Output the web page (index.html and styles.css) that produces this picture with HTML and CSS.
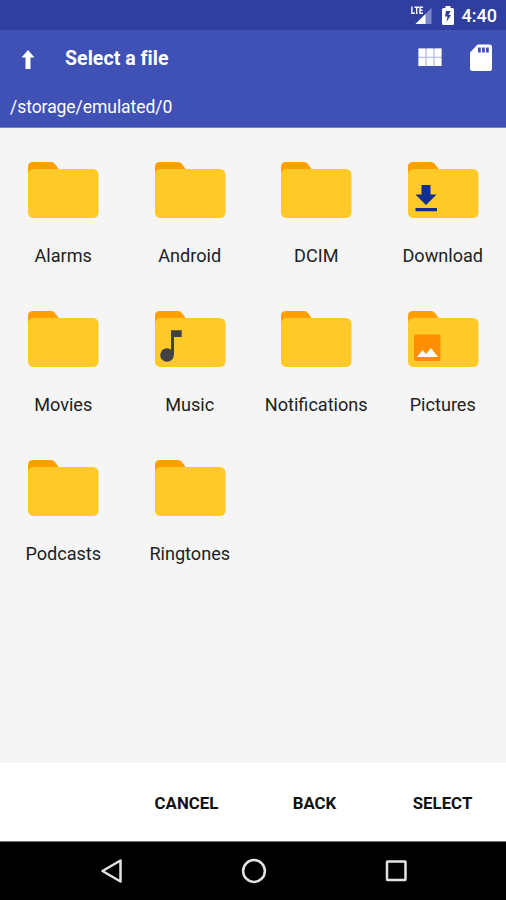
FILE: index.html
```html
<!DOCTYPE html>
<html lang="en">
<head>
<meta charset="utf-8">
<title>Select a file</title>
<link rel="stylesheet" href="styles.css">
</head>
<body>
<svg class="defs" aria-hidden="true">
  <symbol id="folder" viewBox="0 0 72 58">
    <path fill="#ffa000" d="M1 20V6Q1 1 6 1H24Q26.500 1 28 3L33 10V20Z"/>
    <rect x="1" y="8" width="70.500" height="49" rx="5.500" fill="#ffca28"/>
  </symbol>
</svg>
<div class="screen">
  <div class="status">
    <svg class="signal" width="22" height="20" viewBox="0 0 22 20">
      <path fill="#7e89cb" d="M20.500 3V19H4.500Z"/>
      <path fill="#fff" d="M14.500 9V19H4.500Z"/>
      <path fill="none" stroke="#fff" stroke-width="1.400" d="M.9 1.500V8.300H4M3.500 2.200H8M5.700 2.200V9M12 2.200H9V8.300H12M9 5.200H11.500"/>
    </svg>
    <svg class="battery" width="12" height="19" viewBox="0 0 12 19">
      <path fill="#fff" d="M3.500 0H8.500V2H10.500Q12 2 12 3.500V17.500Q12 19 10.500 19H1.500Q0 19 0 17.500V3.500Q0 2 1.500 2H3.500Z"/>
      <path fill="#303f9f" d="M8.500 5H4L3 10.500H5.500L4.500 16L9 9H6.500Z"/>
    </svg>
    <span class="clock">4:40</span>
  </div>
  <header>
    <div class="toolbar">
      <svg class="up" width="14" height="20" viewBox="0 0 14 20"><path fill="#fff" d="M7 0L13.500 7.500H9.500V19H4.500V7.500H.5Z"/></svg>
      <h1>Select a file</h1>
      <svg class="view" width="24" height="19" viewBox="0 0 24 19"><path fill="#a9b1df" d="M.5.500H23.500V18H.5Z"/><path fill="#fff" d="M.5.500H7.500V8.700H.5ZM8.600.5H15.400V8.700H8.600ZM16.500.5H23.500V8.700H16.500ZM.5 9.800H7.500V18H.5ZM8.600 9.800H15.400V18H8.600ZM16.500 9.800H23.500V18H16.500Z"/></svg>
      <svg class="card" width="24" height="28" viewBox="0 0 24 28">
        <path fill="#fff" d="M8.500.5H20.500Q23 .5 23 3V24.500Q23 27 20.500 27H3.500Q1 27 1 24.500V8.500Z"/>
        <path fill="#3f51b5" d="M9 3.500H11.800V8.500H9ZM13 3.500H15.800V8.500H13ZM17 3.500H19.800V8.500H17Z"/>
      </svg>
    </div>
    <div class="path">/storage/emulated/0</div>
  </header>
  <main>
    <div class="item"><svg class="icon" viewBox="0 0 72 58"><use href="#folder"/></svg><span>Alarms</span></div>
    <div class="item"><svg class="icon" viewBox="0 0 72 58"><use href="#folder"/></svg><span>Android</span></div>
    <div class="item"><svg class="icon" viewBox="0 0 72 58"><use href="#folder"/></svg><span>DCIM</span></div>
    <div class="item"><svg class="icon" viewBox="0 0 72 58"><use href="#folder"/><path fill="#0d2f91" d="M14.500 24H23.500V33.500H29.500L19 44L8.500 33.500H14.500ZM8.500 47H30V50.300H8.500Z"/></svg><span>Download</span></div>
    <div class="item"><svg class="icon" viewBox="0 0 72 58"><use href="#folder"/></svg><span>Movies</span></div>
    <div class="item"><svg class="icon" viewBox="0 0 72 58"><use href="#folder"/><circle cx="13" cy="45" r="6.800" fill="#424242"/><path fill="#424242" d="M17 20.300H27.700V27H20V45H17Z"/></svg><span>Music</span></div>
    <div class="item"><svg class="icon" viewBox="0 0 72 58"><use href="#folder"/></svg><span>Notifications</span></div>
    <div class="item"><svg class="icon" viewBox="0 0 72 58"><use href="#folder"/><rect x="7" y="24.500" width="26.500" height="26.500" rx="2" fill="#ff8f00"/><path fill="#fff" d="M10 47L15.500 40L19 44L24 38L31 47Z"/></svg><span>Pictures</span></div>
    <div class="item"><svg class="icon" viewBox="0 0 72 58"><use href="#folder"/></svg><span>Podcasts</span></div>
    <div class="item"><svg class="icon" viewBox="0 0 72 58"><use href="#folder"/></svg><span>Ringtones</span></div>
  </main>
  <footer>
    <button>CANCEL</button>
    <button>BACK</button>
    <button>SELECT</button>
  </footer>
  <nav>
    <svg width="26" height="26" viewBox="0 0 26 26"><path d="M21.500 2.500V23.500L3.500 13Z"/></svg>
    <svg width="26" height="26" viewBox="0 0 26 26"><circle cx="13" cy="13" r="10.900"/></svg>
    <svg width="26" height="26" viewBox="0 0 26 26"><rect x="4" y="3.500" width="18.500" height="18.500" rx=".5"/></svg>
  </nav>
</div>
</body>
</html>
```
FILE: styles.css
```css
* { box-sizing: border-box; }
body { margin: 0; font-family: Roboto, "Liberation Sans", sans-serif; }
svg { display: block; flex: none; }
.defs { position: absolute; width: 0; height: 0; }
.screen { width: 506px; height: 900px; display: flex; flex-direction: column; background: #f5f5f5; overflow: hidden; }
.status { height: 30px; background: #303f9f; color: #fff; display: flex; align-items: center; justify-content: flex-end; padding-right: 9px; }
.signal { margin: -1px 9px 0 0; }
.battery { margin-right: 8px; }
.clock { font-size: 18px; font-weight: 500; line-height: 30px; padding-top: 2px; }
header { height: 98px; background: #3f51b5; color: #fff; border-bottom: 1px solid #7784ca; }
.toolbar { height: 56px; display: flex; align-items: center; padding: 0 12px 0 21px; }
.up { margin-top: 3px; }
h1 { margin: 1px auto 0 30px; font-size: 19.500px; font-weight: 700; line-height: 55px; letter-spacing: .05px; }
.view { margin-right: 27px; margin-top: -2px; }
.card { margin-right: 1px; }
.path { padding-left: 10px; font-size: 17.500px; line-height: 42px; letter-spacing: -.05px; }
main { flex: 1; display: grid; grid-template-columns: repeat(4, 1fr); grid-auto-rows: 149px; }
.item { display: flex; flex-direction: column; align-items: center; padding-top: 33px; color: #212121; }
.icon { width: 72px; height: 58px; }
.item span { margin-top: 24px; font-size: 18.100px; line-height: 26px; white-space: nowrap; }
footer { height: 79px; background: #fff; display: grid; grid-template-columns: repeat(3, 128px); justify-content: end; border-bottom: 1px solid #777; }
button { border: 0; padding: 1px 0 0 1px; background: none; font: 700 16.800px Roboto, "Liberation Sans", sans-serif; letter-spacing: .05px; color: #111; }
nav { height: 58px; background: #000; display: flex; justify-content: center; align-items: center; gap: 116px; padding-left: 1px; }
nav svg { fill: none; stroke: #e3e3e3; stroke-width: 2.500; stroke-linejoin: round; }
```
